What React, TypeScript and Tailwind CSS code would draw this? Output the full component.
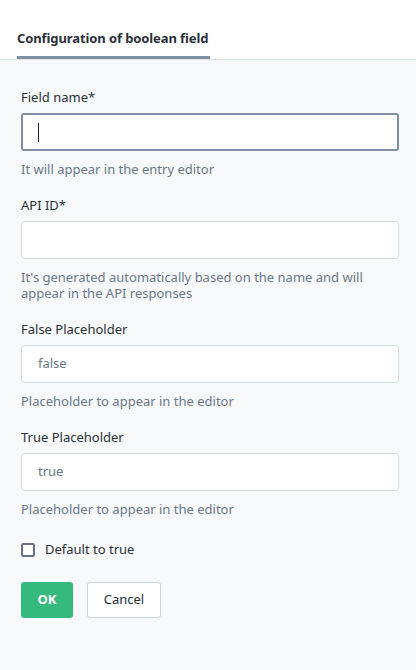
export default function App() {
  const font = { fontFamily: '"Noto Sans", "Open Sans", sans-serif' };

  const Field = ({
    label,
    value,
    help,
    focused,
  }: {
    label: string;
    value?: string;
    help: React.ReactNode;
    focused?: boolean;
  }) => (
    <div className="flex flex-col">
      <label className="text-[13px] leading-[18px] text-[#2a3039] mb-[7px]">{label}</label>
      <div
        className={`h-[38px] w-[378px] rounded-[3px] bg-white flex items-center px-[15px] text-[13px] ${
          focused ? 'border-2 border-[#8091a5]' : 'border border-[#d3dce0] px-[16px]'
        }`}
      >
        {focused ? (
          <span className="block w-px h-[19px] bg-[#1a1a1a]" />
        ) : (
          <span className="text-[#6a7889]">{value}</span>
        )}
      </div>
      <p className="text-[13px] leading-[16px] text-[#6a7889] mt-[10px] w-[350px]">{help}</p>
    </div>
  );

  return (
    <div className="w-[416px] h-[670px] bg-[#f7f9fa] flex flex-col" style={font}>
      <div className="h-[60px] bg-white border-b border-[#dbe2e6] flex items-end px-[17px]">
        <div className="border-b-[3px] border-[#8091a5] pb-[7px] pr-[2px]">
          <span className="text-[13px] font-bold text-[#2a3039] tracking-[-0.1px]">
            Configuration of boolean field
          </span>
        </div>
      </div>

      <div className="flex flex-col px-[21px] pt-[28px] gap-[19px]">
        <Field label="Field name*" focused help="It will appear in the entry editor" />
        <Field
          label="API ID*"
          help="It's generated automatically based on the name and will appear in the API responses"
        />
        <Field label="False Placeholder" value="false" help="Placeholder to appear in the editor" />
        <Field label="True Placeholder" value="true" help="Placeholder to appear in the editor" />
      </div>

      <label className="flex items-center gap-[10px] px-[21px] mt-[23px]">
        <span className="w-[14px] h-[14px] border-2 border-[#67728a] rounded-[2px] bg-white" />
        <span className="text-[13px] text-[#2a3039]">Default to true</span>
      </label>

      <div className="flex gap-[14px] px-[21px] mt-[22px]">
        <button className="h-[36px] w-[52px] rounded-[3px] bg-[#35b97c] text-white text-[13px] font-bold">
          OK
        </button>
        <button className="h-[36px] w-[74px] rounded-[3px] bg-white border border-[#c5d2d8] text-[#2a3039] text-[13px]">
          Cancel
        </button>
      </div>
    </div>
  );
}
